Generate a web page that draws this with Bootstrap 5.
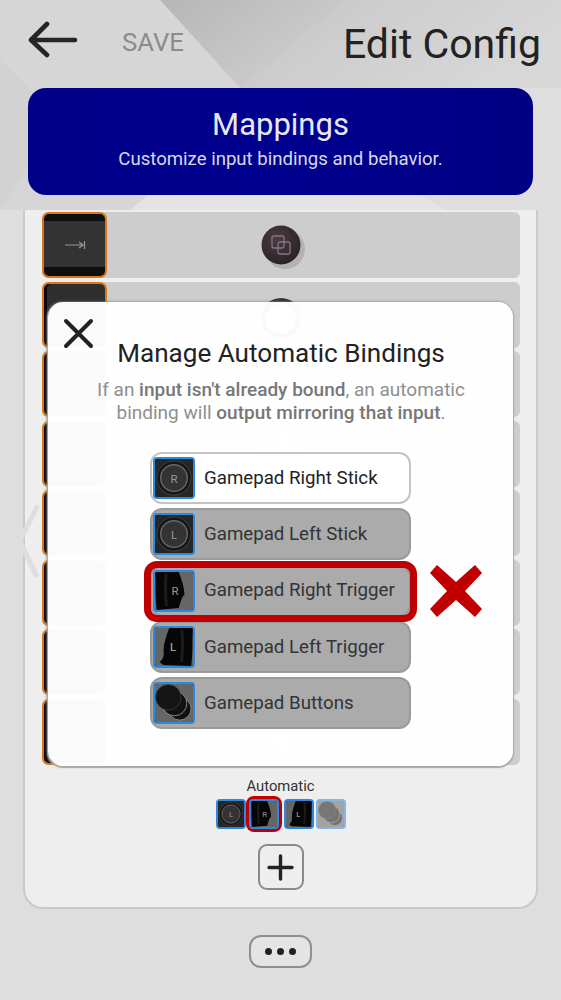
<!doctype html>
<html lang="en"><head><meta charset="utf-8"><title>Edit Config</title>
<link href="https://cdn.jsdelivr.net/npm/bootstrap@5.3.0/dist/css/bootstrap.min.css" rel="stylesheet">
<style>
html,body{margin:0;background:#d6d6d6}
body{width:561px;height:1000px;overflow:hidden;position:relative;font-family:Roboto,"Liberation Sans",sans-serif;color:#222}
.backdrop{position:absolute;inset:0;z-index:0}
.screen{position:relative;z-index:1;height:1000px}
.topbar{height:88px;padding:0 20px 0 28px}
.back-arrow{width:50px;height:40px;margin-top:-8px}
.save-lbl{font-size:25.7px;color:#8b8b8b;margin-left:44px;margin-top:-2px;line-height:1}
.page-title{font-size:41px;line-height:1;margin:1px 0 0 auto;font-weight:400}
.hero{height:107px;margin:0 28px;border-radius:18px;background:linear-gradient(90deg,#000088,#00008f 50%,#000084);color:#e8e8f4;text-align:center;padding-top:19px}
.hero-title{font-size:31px;line-height:36px;font-weight:400;margin:0}
.hero-sub{font-size:18.6px;line-height:24px;margin:4px 0 0;color:#d8d8ea}
.panel{height:699px;margin:15px 23px 0 23px;background:#eee;border:2px solid #c9c9c9;border-top:0;border-radius:0 0 20px 20px}
.rows{height:555px;padding:2px 16px 0 17px;overflow:hidden}
.map-row{height:66px;margin-bottom:3.5px;background:#cdcdcd;border-radius:6px}
.keycap{width:65px;height:66px;flex:none;background:#2e2e2e;border:2px solid #d9761a;border-radius:7px;box-shadow:inset 3px 0 0 #0b0b0b;color:#aaa;font-size:10px}
.keycap-first{background:linear-gradient(#0e0e0e 0 11%,#333 11% 86%,#0e0e0e 86%);box-shadow:none}
.center-ic{flex:1;padding-right:65px}
.ball-view{margin:4px 0 0 3px}
.ball-xbox{margin-top:14px}
.auto-lbl{font-size:14.8px;line-height:16px;text-align:center;margin-top:13px;color:#333}
.mini-row{height:37px;margin-top:1px;gap:2px}
.mini-ic{width:30px;height:30px;border:2px solid #2d88e0;border-radius:4px;overflow:hidden;flex:none;background:#222}
.mini-ic svg{display:block;width:100%;height:100%}
.mini-off{opacity:.55}
.mini-hit{padding:3px;background:#c00000;border-radius:8px;width:36px;height:36px;margin-left:-2px}
.plus-btn{width:46px;height:46px;border:2px solid #8a8a8a;border-radius:9px;background:#eee;margin:12px auto 0}
.more-btn{width:63px;height:33px;border:2px solid #8f8f8f;border-radius:12px;background:#e4e4e4;margin:26px 0 0 249px;gap:5px}
.more-dot{width:7px;height:7px;border-radius:50%;background:#222}
.chev{position:absolute;left:15px;top:503px;width:26px;height:76px;z-index:2}
.dialog{position:absolute;left:48px;top:302px;width:465px;height:464px;z-index:3;background:rgba(255,255,255,.975);border-radius:15px;box-shadow:0 1px 1px 1px #a9a9a9,-1px 0 3px #777;padding:0 0 0 102px}
.close-x{position:absolute;left:14px;top:15px;width:33px;height:33px}
.dlg-title{font-size:26.1px;line-height:31px;font-weight:400;margin:36px 0 0 -44px;width:350px;text-align:center;color:#222}
.dlg-desc{font-size:19px;line-height:23px;color:#8f8f8f;margin:9px 0 0 -74px;width:410px;text-align:center}
.dlg-desc b{font-weight:500;color:#777}
.bind-list{margin-top:28px;gap:4.25px;width:261px}
.bind{height:52px;border:2px solid #9a9a9a;border-radius:12px;background:#ababab;font-size:18.7px;color:#333;padding-left:1px;gap:9px}
.bind-on{background:#fff;border-color:#c4c4c4;color:#222}
.bind-ic{width:42px;height:42px;border:2px solid #2d88e0;border-radius:4px;flex:none;overflow:hidden;background:#222}
.bind-ic svg{display:block;width:100%;height:100%}
.red-frame{position:absolute;left:96px;top:259px;width:273px;height:61px;border:7px solid #c00000;border-radius:13px}
.red-x{position:absolute;left:381px;top:262px;width:54px;height:54px}
</style></head><body>
<svg width="0" height="0" class="position-absolute"><defs>
<linearGradient id="gd" x1="0" y1="0" x2="1" y2="0.3"><stop offset="0" stop-color="#b6b6b6"/><stop offset=".5" stop-color="#cbcbcb"/><stop offset="1" stop-color="#d8d8d8"/></linearGradient>
<radialGradient id="ball" cx=".4" cy=".35" r=".7"><stop offset="0" stop-color="#4a3d43"/><stop offset="1" stop-color="#2a2025"/></radialGradient>
<symbol id="ic-rs" viewBox="0 0 40 40"><rect width="40" height="40" fill="#262626"/><circle cx="20" cy="20" r="18" fill="#161616" stroke="#444" stroke-width="1"/><circle cx="20" cy="20" r="14" fill="#333" stroke="#666" stroke-width="1.5"/><text x="20" y="25" font-size="12" font-family="Roboto" fill="#999" text-anchor="middle">R</text></symbol>
<symbol id="ic-ls" viewBox="0 0 40 40"><rect width="40" height="40" fill="#262626"/><circle cx="20" cy="20" r="18" fill="#161616" stroke="#444" stroke-width="1"/><circle cx="20" cy="20" r="14" fill="#333" stroke="#666" stroke-width="1.5"/><text x="20" y="25" font-size="12" font-family="Roboto" fill="#999" text-anchor="middle">L</text></symbol>
<symbol id="ic-rt" viewBox="0 0 40 40"><rect width="40" height="40" fill="#666"/><path d="M0 0H25C28 8 31 16 31 24C28 27 27 31 25 38L2 40C0 30 1 10 0 0Z" fill="#060606"/><path d="M12 2C10 12 11 24 12 36" stroke="#1c1c1c" stroke-width="3" fill="none"/><text x="21" y="24" font-size="12" font-family="Roboto" fill="#999" text-anchor="middle">R</text></symbol>
<symbol id="ic-lt" viewBox="0 0 40 40"><rect width="40" height="40" fill="#666"/><path d="M40 0H15C12 8 9 16 9 24C10 30 8 33 5 36L9 39L38 40C40 30 39 10 40 0Z" fill="#060606"/><path d="M28 2C30 12 29 24 28 36" stroke="#1c1c1c" stroke-width="3" fill="none"/><text x="19" y="24" font-size="12" font-family="Roboto" fill="#bbb" text-anchor="middle">L</text></symbol>
<symbol id="ic-bt" viewBox="0 0 40 40"><rect width="40" height="40" fill="#666"/><circle cx="26" cy="26" r="12" fill="#111" stroke="#999" stroke-width=".9"/><circle cx="20.500" cy="20.500" r="13" fill="#111" stroke="#999" stroke-width=".9"/><circle cx="14" cy="14" r="13.500" fill="#151515" stroke="#555" stroke-width=".6"/></symbol>
<symbol id="ic-dpad" viewBox="0 0 60 60"><path d="M22 2H38V22H58V38H38V58H22V38H2V22H22Z" fill="#e4e4e4"/></symbol>
</defs></svg>

<svg class="backdrop" viewBox="0 0 561 1000" aria-hidden="true">
<rect width="561" height="1000" fill="#dedede"/>
<polygon points="0,0 160,0 240,88 240,210 0,210" fill="#d6d6d6"/>
<polygon points="0,60 60,118 0,210" fill="#d2d2d2"/>
<polygon points="160,0 561,0 561,88 240,88" fill="url(#gd)"/>
<polygon points="345,0 240,88 561,88 561,0" fill="#d2d2d2" opacity=".25"/>
<polygon points="130,210 148,195 420,195 445,210" fill="#e4e4e4"/>
</svg>

<div class="screen">
<div class="topbar d-flex align-items-center">
<svg class="back-arrow" viewBox="0 0 50 40"><path d="M47 20H4M19 4L3 20L19 35" fill="none" stroke="#252525" stroke-width="4.6" stroke-linecap="round" stroke-linejoin="round"/></svg>
<span class="save-lbl">SAVE</span>
<h1 class="page-title">Edit Config</h1>
</div>
<div class="hero"><h2 class="hero-title">Mappings</h2><p class="hero-sub">Customize input bindings and behavior.</p></div>

<div class="panel">
<div class="rows">
<div class="map-row d-flex"><div class="keycap keycap-first d-flex align-items-center justify-content-center"><svg width="22" height="10" viewBox="0 0 22 10"><path d="M1 5H19M15 2L19 5L15 8M20.500 1V9" fill="none" stroke="#999" stroke-width="1.2"/></svg></div><div class="center-ic d-flex align-items-center justify-content-center"><svg class="ball-view" width="44" height="46" viewBox="0 0 44 46"><circle cx="24" cy="25" r="20" fill="#b3b3b3"/><circle cx="20" cy="21" r="19.500" fill="url(#ball)"/><rect x="11" y="12" width="12" height="12" rx="2" fill="none" stroke="#85777d" stroke-width="1.3"/><rect x="17" y="18" width="12" height="12" rx="2" fill="none" stroke="#85777d" stroke-width="1.3"/></svg></div></div>
<div class="map-row d-flex"><div class="keycap"></div><div class="center-ic d-flex align-items-start justify-content-center"><svg class="ball-xbox" width="44" height="44" viewBox="0 0 44 44"><circle cx="22" cy="22" r="20" fill="url(#ball)"/><circle cx="22" cy="23" r="15" fill="#f4f4f4"/></svg></div></div>
<div class="map-row d-flex"><div class="keycap"></div><div class="center-ic"></div></div>
<div class="map-row d-flex"><div class="keycap"></div><div class="center-ic d-flex align-items-center justify-content-center"><svg width="46" height="46"><use href="#ic-dpad"/></svg></div></div>
<div class="map-row d-flex"><div class="keycap"></div><div class="center-ic"></div></div>
<div class="map-row d-flex"><div class="keycap"></div><div class="center-ic"></div></div>
<div class="map-row d-flex"><div class="keycap"></div><div class="center-ic"></div></div>
<div class="map-row d-flex"><div class="keycap"></div><div class="center-ic d-flex align-items-center justify-content-center"><svg width="46" height="46"><use href="#ic-dpad"/></svg></div></div>
</div>
<div class="auto-lbl">Automatic</div>
<div class="mini-row d-flex justify-content-center align-items-center">
<div class="mini-ic"><svg><use href="#ic-ls"/></svg></div>
<div class="mini-hit"><div class="mini-ic"><svg><use href="#ic-rt"/></svg></div></div>
<div class="mini-ic"><svg><use href="#ic-lt"/></svg></div>
<div class="mini-ic mini-off"><svg><use href="#ic-bt"/></svg></div>
</div>
<div class="plus-btn d-flex align-items-center justify-content-center"><svg width="27" height="27" viewBox="0 0 27 27"><path d="M13.500 2V25M2 13.500H25" stroke="#222" stroke-width="3.400" stroke-linecap="round"/></svg></div>
</div>
<div class="more-btn d-flex align-items-center justify-content-center"><span class="more-dot"></span><span class="more-dot"></span><span class="more-dot"></span></div>
</div>

<svg class="chev" viewBox="0 0 26 76"><path d="M22 4L5 38L21 72" fill="none" stroke="#dedede" stroke-width="5" stroke-linecap="round" stroke-linejoin="round"/></svg>

<div class="dialog">
<svg class="close-x" viewBox="0 0 33 33"><path d="M4 4L29 29M29 4L4 29" stroke="#222" stroke-width="4" stroke-linecap="round"/></svg>
<h3 class="dlg-title">Manage Automatic Bindings</h3>
<p class="dlg-desc"><span>If an </span><b>input isn't already bound</b><span>, an automatic binding will </span><b>output mirroring that input</b><span>.</span></p>
<div class="bind-list d-flex flex-column">
<div class="bind bind-on d-flex align-items-center"><div class="bind-ic"><svg><use href="#ic-rs"/></svg></div><span>Gamepad Right Stick</span></div>
<div class="bind d-flex align-items-center"><div class="bind-ic"><svg><use href="#ic-ls"/></svg></div><span>Gamepad Left Stick</span></div>
<div class="bind d-flex align-items-center"><div class="bind-ic"><svg><use href="#ic-rt"/></svg></div><span>Gamepad Right Trigger</span></div>
<div class="bind d-flex align-items-center"><div class="bind-ic"><svg><use href="#ic-lt"/></svg></div><span>Gamepad Left Trigger</span></div>
<div class="bind d-flex align-items-center"><div class="bind-ic"><svg><use href="#ic-bt"/></svg></div><span>Gamepad Buttons</span></div>
</div>
<div class="red-frame"></div>
<svg class="red-x" viewBox="0 0 54 54"><path d="M8 1L27 18L46 1L53 9L36 27L53 45L46 53L27 36L8 53L1 45L18 27L1 9Z" fill="#c00000"/></svg>
</div>
<script src="https://cdn.jsdelivr.net/npm/bootstrap@5.3.0/dist/js/bootstrap.bundle.min.js"></script>
</body></html>
